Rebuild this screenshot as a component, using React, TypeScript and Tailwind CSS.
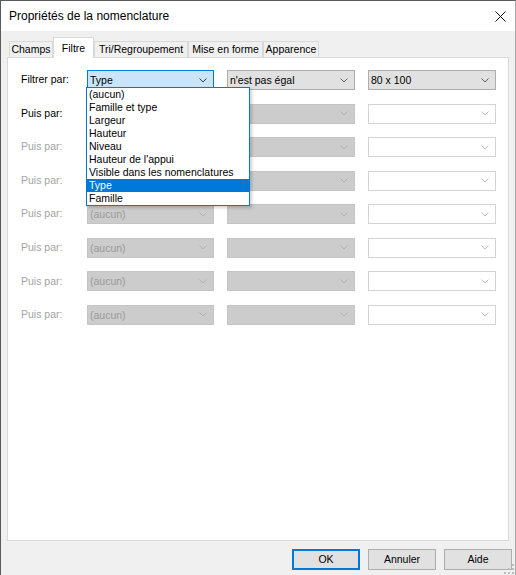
import React from 'react';

type Variant = 'open' | 'normal' | 'disabled' | 'empty';

const comboStyles: Record<Variant, { box: string; text: string; chevron: string }> = {
  open: { box: 'bg-[#cce4f7] border-[#0078d7]', text: 'text-black', chevron: '#3c3c3c' },
  normal: { box: 'bg-[#e1e1e1] border-[#adadad]', text: 'text-black', chevron: '#606060' },
  disabled: { box: 'bg-[#cccccc] border-[#c4c4c4]', text: 'text-[#9a9a9a]', chevron: '#b0b0b0' },
  empty: { box: 'bg-white border-[#d4d4d4]', text: 'text-black', chevron: '#bdbdbd' },
};

function Chevron({ color }: { color: string }) {
  return (
    <svg width="8" height="5" viewBox="0 0 8 5" className="shrink-0">
      <path d="M0.5 0.5 L4 4 L7.5 0.5" fill="none" stroke={color} strokeWidth="1" />
    </svg>
  );
}

function Combo({ variant, value, width }: { variant: Variant; value?: string; width: string }) {
  const s = comboStyles[variant];
  return (
    <div className={`${width} h-[20px] border ${s.box} flex items-center justify-between pl-[2px] pr-[6px]`}>
      <span className={`${s.text} leading-none`}>{value ?? ''}</span>
      <Chevron color={s.chevron} />
    </div>
  );
}

const listItems = [
  '(aucun)',
  'Famille et type',
  'Largeur',
  'Hauteur',
  'Niveau',
  "Hauteur de l'appui",
  'Visible dans les nomenclatures',
  'Type',
  'Famille',
];

function DropList() {
  return (
    <div className="absolute left-[-1px] top-[17px] w-[164px] bg-white border border-[#0078d7] shadow-[2px_2px_3px_rgba(0,0,0,0.18)] z-10 flex flex-col">
      {listItems.map((item) => (
        <div
          key={item}
          className={`h-[13px] flex items-center pl-[2px] leading-none ${
            item === 'Type' ? 'bg-[#0078d7] text-white' : 'text-black'
          }`}
        >
          {item}
        </div>
      ))}
    </div>
  );
}

const tabs = [
  { label: 'Champs', w: 'w-[44px]' },
  { label: 'Filtre', w: 'w-[41px]' },
  { label: 'Tri/Regroupement', w: 'w-[94px]' },
  { label: 'Mise en forme', w: 'w-[75px]' },
  { label: 'Apparence', w: 'w-[56px]' },
];

export default function App() {
  // rows 3..8, the first two of them sit under the open list
  const rest = Array.from({ length: 6 }, (_, i) => i);

  return (
    <div className="w-[516px] h-[575px] overflow-hidden bg-[#f0f0f0] border-l border-t border-r border-l-[#5a5a5a] border-t-[#5a5a5a] border-r-[#a8a8a8] relative flex flex-col text-[10.5px] font-['Liberation_Sans',Arial,sans-serif]">
      {/* Title bar */}
      <div className="h-[30px] bg-white flex items-center justify-between pl-[8px] pr-[9px] shrink-0">
        <span className="text-[12px] text-black">Propriétés de la nomenclature</span>
        <svg width="11" height="11" viewBox="0 0 11 11">
          <path d="M0.5 0.5 L10.5 10.5 M10.5 0.5 L0.5 10.5" stroke="#111" strokeWidth="1" />
        </svg>
      </div>

      {/* Tabs */}
      <div className="flex items-end pl-[8px] mt-[6px] h-[20px] relative z-[1]">
        {tabs.map((t) =>
          t.label === 'Filtre' ? (
            <div
              key={t.label}
              className={`${t.w} h-[21px] mb-[-1px] bg-white border border-b-0 border-[#d9d9d9] flex items-start justify-center pt-[3px] text-black`}
            >
              {t.label}
            </div>
          ) : (
            <div
              key={t.label}
              className={`${t.w} h-[16px] bg-[#f0f0f0] border border-b-0 border-[#d9d9d9] flex items-center justify-center text-black`}
            >
              {t.label}
            </div>
          )
        )}
      </div>

      {/* Panel */}
      <div className="ml-[6px] w-[502px] h-[484px] bg-white border border-[#d9d9d9] pt-[12px] pl-[13px] shrink-0">
        <div className="flex flex-col gap-[13.57px]">
          {/* Row 1 */}
          <div className="flex items-center">
            <div className="w-[66px] text-black">Filtrer par:</div>
            <div className="relative">
              <Combo variant="open" value="Type" width="w-[127px]" />
              <DropList />
            </div>
            <div className="ml-[13px]">
              <Combo variant="normal" value="n'est pas égal" width="w-[128px]" />
            </div>
            <div className="ml-[13px]">
              <Combo variant="normal" value="80 x 100" width="w-[128px]" />
            </div>
          </div>

          {/* Row 2 */}
          <div className="flex items-center">
            <div className="w-[66px] text-black">Puis par:</div>
            <Combo variant="empty" width="w-[127px]" />
            <div className="ml-[13px]">
              <Combo variant="disabled" width="w-[128px]" />
            </div>
            <div className="ml-[13px]">
              <Combo variant="empty" width="w-[128px]" />
            </div>
          </div>

          {rest.map((i) => (
            <div key={i} className="flex items-center">
              <div className="w-[66px] text-[#a3a3a3]">Puis par:</div>
              <Combo variant="disabled" value={i < 2 ? undefined : '(aucun)'} width="w-[127px]" />
              <div className="ml-[13px]">
                <Combo variant="disabled" width="w-[128px]" />
              </div>
              <div className="ml-[13px]">
                <Combo variant="empty" width="w-[128px]" />
              </div>
            </div>
          ))}
        </div>
      </div>

      {/* Buttons */}
      <div className="flex justify-end gap-[8px] mt-[8px] pr-[3px]">
        <button className="w-[68px] h-[21px] bg-[#e1e1e1] border border-[#0078d7] shadow-[inset_0_0_0_1px_#0078d7] text-black">
          OK
        </button>
        <button className="w-[68px] h-[21px] bg-[#e1e1e1] border border-[#adadad] text-black">Annuler</button>
        <button className="w-[68px] h-[21px] bg-[#e1e1e1] border border-[#adadad] text-black">Aide</button>
      </div>

      {/* Resize grip */}
      <svg width="10" height="10" viewBox="0 0 10 10" className="absolute right-[1px] bottom-[1px]">
        <rect x="8" y="0" width="2" height="2" fill="#bcbcbc" />
        <rect x="4" y="4" width="2" height="2" fill="#bcbcbc" />
        <rect x="8" y="4" width="2" height="2" fill="#bcbcbc" />
        <rect x="0" y="8" width="2" height="2" fill="#bcbcbc" />
        <rect x="4" y="8" width="2" height="2" fill="#bcbcbc" />
        <rect x="8" y="8" width="2" height="2" fill="#bcbcbc" />
      </svg>
    </div>
  );
}
